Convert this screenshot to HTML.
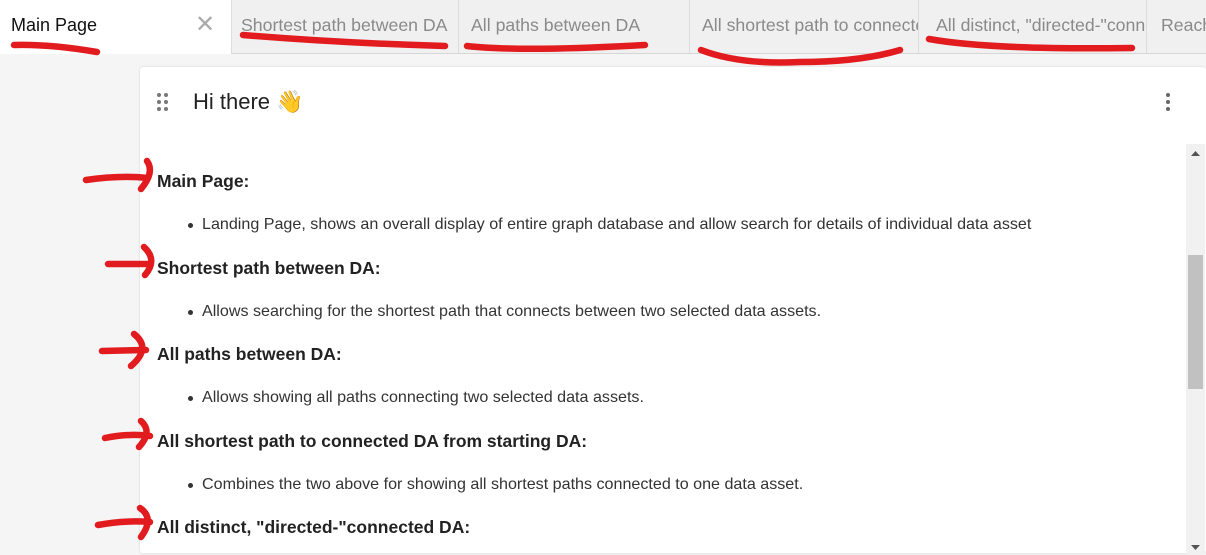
<!DOCTYPE html>
<html><head><meta charset="utf-8"><style>
*{margin:0;padding:0;box-sizing:border-box}
body{width:1206px;height:555px;overflow:hidden;background:#f5f5f5;font-family:"Liberation Sans",Arial,sans-serif;position:relative}
.tabs{position:absolute;left:0;top:0;width:1206px;height:54px;background:#f0f0f0;border-bottom:1px solid #d6d6d6}
.tab{position:absolute;top:0;height:53px;line-height:50px;font-size:17.7px;color:#8a8a8a;padding-left:11px;white-space:nowrap;overflow:hidden;border-right:1px solid #dcdcdc}
.tab.active{background:#fff;color:#111;height:54px;font-size:18px}
.x{position:absolute;left:195px;top:0;color:#aaa;font-size:24px;font-weight:300}
.card{position:absolute;left:140px;top:67px;width:1066px;height:486px;background:#fff;border-radius:3px;box-shadow:0 0 2px rgba(0,0,0,.15)}
.title{position:absolute;left:53px;top:22px;font-size:22px;color:#222}
.h{position:absolute;left:17px;font-size:17.5px;font-weight:bold;color:#222}
.b{position:absolute;left:62px;font-size:16.1px;color:#333}
.b:before{content:"";position:absolute;left:-14px;top:8px;width:5px;height:5px;border-radius:50%;background:#333}
.sb{position:absolute;left:1186px;top:144px;width:19px;height:411px;background:#f1f1f1}
.th{position:absolute;left:1188px;top:255px;width:15px;height:134px;background:#c1c1c1}
</style></head><body>
<div class="tabs">
<div class="tab active" style="left:0;width:232px">Main Page<span class="x">✕</span></div>
<div class="tab" style="left:232px;width:227px;padding-left:9px">Shortest path between DA</div>
<div class="tab" style="left:459px;width:231px;padding-left:12px">All paths between DA</div>
<div class="tab" style="left:690px;width:229px;padding-left:12px">All shortest path to connected DA</div>
<div class="tab" style="left:919px;width:228px;padding-left:17px">All distinct, "directed-"connected DA</div>
<div class="tab" style="left:1147px;width:59px;padding-left:14px;border-right:none">Reachable</div>
</div>
<div class="card">
<svg style="position:absolute;left:17px;top:26px" width="12" height="18"><g fill="#777"><circle cx="2" cy="2" r="2"/><circle cx="9" cy="2" r="2"/><circle cx="2" cy="9" r="2"/><circle cx="9" cy="9" r="2"/><circle cx="2" cy="16" r="2"/><circle cx="9" cy="16" r="2"/></g></svg>
<div class="title">Hi there <span style="font-family:'Noto Color Emoji',sans-serif">👋</span></div>
<svg style="position:absolute;left:1026px;top:26px" width="4" height="18"><g fill="#666"><circle cx="2" cy="2" r="2"/><circle cx="2" cy="9" r="2"/><circle cx="2" cy="16" r="2"/></g></svg>
<div class="h" style="top:104px">Main Page:</div>
<div class="b" style="top:148px">Landing Page, shows an overall display of entire graph database and allow search for details of individual data asset</div>
<div class="h" style="top:191px">Shortest path between DA:</div>
<div class="b" style="top:235px">Allows searching for the shortest path that connects between two selected data assets.</div>
<div class="h" style="top:277px">All paths between DA:</div>
<div class="b" style="top:321px">Allows showing all paths connecting two selected data assets.</div>
<div class="h" style="top:364px">All shortest path to connected DA from starting DA:</div>
<div class="b" style="top:408px">Combines the two above for showing all shortest paths connected to one data asset.</div>
<div class="h" style="top:450px">All distinct, "directed-"connected DA:</div>
</div>
<div class="sb"></div><div class="th"></div>
<svg style="position:absolute;left:1190px;top:150px" width="11" height="8"><path d="M1 6 L5.5 1 L10 6Z" fill="#555"/></svg>
<svg style="position:absolute;left:1190px;top:544px" width="11" height="8"><path d="M1 1 L5.5 6 L10 1Z" fill="#555"/></svg>
<svg style="position:absolute;left:0;top:0" width="1206" height="555" fill="none" stroke="#e21b1f" stroke-width="6.5" stroke-linecap="round" stroke-linejoin="round">
<path d="M14 45 Q50 44 97 52"/>
<path d="M243 35 Q340 43 445 46"/>
<path d="M467 46 Q520 52 645 45"/>
<path d="M701 50 Q740 65 800 62 Q860 62 900 50"/>
<path d="M929 39 Q990 50 1132 48"/>
<path d="M86 180 Q120 175 148 178"/>
<path d="M147 161 Q155 172 141 189"/>
<path d="M108 264 L150 264"/>
<path d="M144 247 Q158 260 145 275"/>
<path d="M102 351 L146 350"/>
<path d="M134 334 Q152 348 131 366"/>
<path d="M105 438 Q130 433 150 436"/>
<path d="M141 421 Q153 432 139 447"/>
<path d="M98 525 Q125 520 150 522"/>
<path d="M140 508 Q155 518 141 537"/>
</svg>
</body></html>
